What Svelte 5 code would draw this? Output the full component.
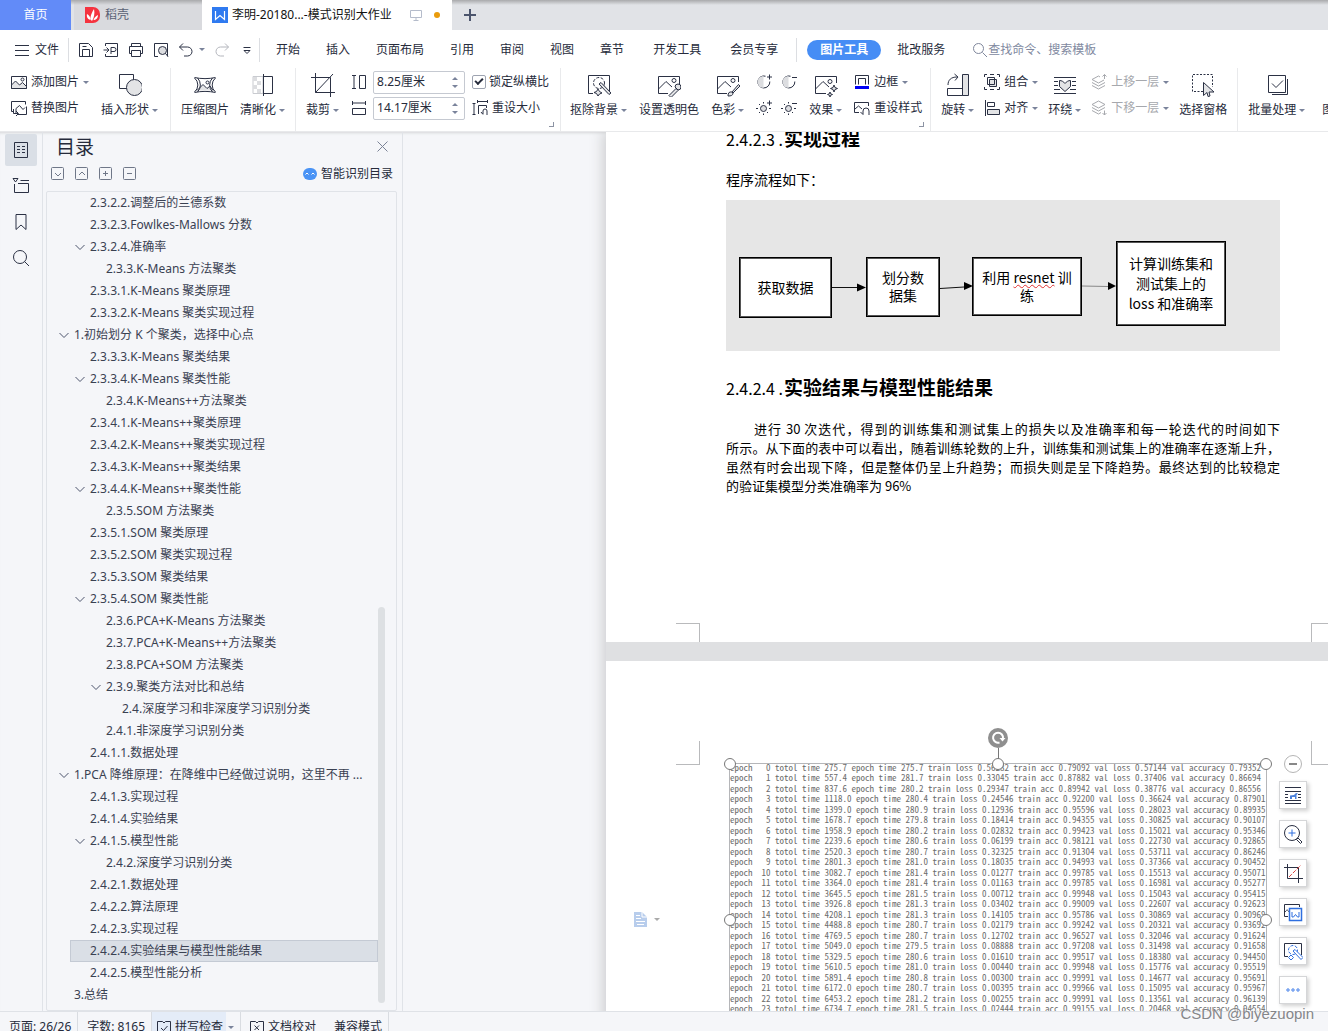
<script>
  const ICONS = {
    // menu row and quick access (16 x 16)
    burger: '<path d="M1 3.500h14M1 8.500h14M1 13.500h14"/>',
    save: '<path d="M1.500 1.500h9l4 4v9h-13zM4.500 14.500v-7h7v7M4.500 4.500h4"/>',
    exportPdf: '<path d="M2.500 4V1.500h12v13h-12V12M.5 8h5M3.500 5.500L6 8l-2.500 2.500M8 12V5.500h3a1.500 1.500 0 010 4H8"/>',
    print: '<path d="M3.500 4.500v-3h9v3M3.500 11.500h-2v-7h13v7h-2M3.500 8.500h9v6h-9z"/>',
    preview: '<path d="M5 14.500H1.500v-13h13v13"/><circle cx="9.500" cy="8.500" r="4" fill="#dcdde0"/><path d="M12.500 11.500l2.500 3"/>',
    undo: '<path d="M5 1.500L1.500 5 5 8.500M1.500 5h8a4.500 4.500 0 010 9H6"/>',
    redo: '<path d="M11 1.500L14.500 5 11 8.500M14.500 5h-8a4.500 4.500 0 000 9H10"/>',
    more: '<path d="M4.500 5.500h7M5 8.500l3 3 3-3z"/>',
    search: '<circle cx="6.500" cy="6.500" r="5"/><path d="M10.500 10.500l4.500 4.500"/>',
    // small ribbon icons (16 x 16)
    addPic: '<path d="M.5 2.500h15v12H.5z"/><path d="M.5 11l4-4 4 4 3-2.500 4 4v2H.5z" fill="#e3e4e6"/><circle cx="11.500" cy="5.500" r="1.500"/>',
    swapPic: '<path d="M3 11.500H.5v-10h14v3M5 13.500V8.500l3.500-3 3.500 4 2-2M15.500 6.500v8h-9M2.500 9v4.500H7M5 11l2.500 2.500L5 16"/>',
    height: '<path d="M1 1.500h4M1 14.500h4M3 1.500v13M8.500 1.500h6v13h-6z"/>',
    width: '<path d="M1.500 1v4M14.500 1v4M1.500 3h13M1.500 8.500h13v6h-13z"/>',
    resetSize: '<path d="M.5 3.500h3M.5 14.500h3M2 3.500v11M5 1.500h11M5.500 0v3M15.500 0v3M6.500 14V5.500h8V8M9 12l2 2.500M11 14v-3a2 2 0 014 0v4"/>',
    conUp: '<path d="M9.500 2.200A6 6 0 1013.800 7.500" fill="none"/><path d="M7.500 2a6 6 0 000 12z" fill="#dcdde0" stroke="none"/><path d="M11 3h5M13.500.5v5"/>',
    conDown: '<path d="M9.500 2.200A6 6 0 1013.800 7.500" fill="none"/><path d="M7.500 2a6 6 0 000 12z" fill="#dcdde0" stroke="none"/><path d="M11 3.500h5"/>',
    briUp: '<circle cx="7.500" cy="8.500" r="3" fill="#dcdde0"/><path d="M7.500 2v1.500M7.500 13.500V15M0 8.500h2M13 8.500h2M3 4l1 1M11 12l1 1M3 13l1-1M11 3h5M13.500.5v5"/>',
    briDown: '<circle cx="7.500" cy="8.500" r="3" fill="#dcdde0"/><path d="M7.500 2v1.500M7.500 13.500V15M0 8.500h2M13 8.500h2M3 4l1 1M11 12l1 1M3 13l1-1M11 3.500h5"/>',
    border: '<path d="M1.500 10.500v-9h13v9M4.500 10.500v-6h7v6"/><path d="M1 13.500h14" stroke="#0000f5" stroke-width="3"/>',
    resetStyle: '<path d="M5 12.500H.5v-10h14V6M1 9l3.500-3L8 9M6.500 12l2.500 2.500M9 14.500V11a3 3 0 016 0v4"/>',
    group: '<path d="M.5 3V.5H3M13 .5h2.500V3M15.500 13v2.500H13M3 15.500H.5V13M6 .5h4M6 15.500h4"/><path d="M5.500 5.500h7v7h-7z" fill="#e3e4e6"/><path d="M3.500 3.500h7v7h-7z"/>',
    align: '<path d="M1.500 0v16M3.500 2.500h7v4h-7z"/><path d="M3.500 9.500h12v5h-12z" fill="#e3e4e6"/>',
    layerUp: '<path d="M9 3L7.500 2 1 5.500 7.500 9 13 6M1 8.500L7.500 12 14 8.500M1 11.500L7.500 15l6.500-3.500M13.500 5V.5M11.500 2.500l2-2 2 2"/>',
    layerDown: '<path d="M7.500 1L1 4.500 7.500 8 14 4.500zM1 7.500L7.500 11 14 7.500M1 10.500L7.500 14l2.500-1.500M13.500 10.500V15M11.500 13l2 2 2-2"/>',
    // large ribbon icons (24 x 24)
    shapes: '<path d="M1.500 1.500h14v14h-14z"/><circle cx="16.500" cy="14.500" r="8" fill="#e3e4e6"/>',
    compress: '<path d="M1.500 4.500c7 1.500 14 1.500 21 0M1.500 19.500c7-1.500 14-1.500 21 0"/><path d="M4 17.500l6-6 4 4 3-2.500 3 4.500" fill="#e3e4e6"/><circle cx="14.500" cy="9.500" r="1.500"/><path d="M1.500 5a9 9 0 010 14M4.500 5a10 10 0 010 14M22.500 5a9 9 0 000 14M19.500 5a10 10 0 000 14"/>',
    sharpen: '<path d="M2 3.500h10v17H2z" fill="#fff" stroke="#c9cbd0"/><path d="M2 4h4v4H2zM6 8h4v4H6zM2 12h4v4H2zM6 16h4v4H6z" fill="#dcdde0" stroke="none"/><path d="M12.500 1v22M12 3.500h9.500v17H12"/>',
    crop: '<path d="M4.500 0v19.500H24M0 4.500h19.500V24M4.500 19.500L22 1"/>',
    cutout: '<path d="M6 20.500H1.500v-18h21v16"/><circle cx="12" cy="10" r="5.500" stroke-dasharray="3 1.500"/><path d="M12 11l2-1.500 10 10.500-2 1.500zM11 16l1.500 2.500L15 20l-2.500 1L11 23l-1.500-2.500L7 19.500l2.500-1z" fill="#e3e4e6"/>',
    transp: '<path d="M11 20.500H1.500v-17h21V11M1.500 16L9 8.500l6 5.500"/><circle cx="17" cy="7.500" r="2"/><path d="M12 22.500l7-7 2 2-7 7zM18 14a3 3 0 113 3z" fill="#e3e4e6"/>',
    color: '<path d="M11 20.500H1.500v-17h21V9M1.500 16L9 8.500l6 5.500"/><circle cx="17" cy="7.500" r="2"/><path d="M12 23c0-3 1-4.500 4-4l1 1c0 2.500-2 3-5 3zM16 19l6.500-7.500 1.500 1.500-7 7z" fill="#e3e4e6"/>',
    effect: '<path d="M12 20.500H1.500v-17h21V10M1.500 16L9 8.500l6 5.500"/><circle cx="16" cy="8.500" r="2"/><path d="M20 12l1 2.500 2.500 1-2.500 1-1 2.500-1-2.500-2.500-1 2.500-1zM16 19l.7 1.800 1.800.7-1.800.7L16 24l-.7-1.800-1.800-.7 1.800-.7z" fill="#e3e4e6"/>',
    rotate: '<path d="M16.500 1.500h6v21h-6z" fill="#e3e4e6"/><path d="M1.500 15.500h15v7h-15zM2 12c0-5 3-8 9-8M8.500 1L12 4 9 7.500"/>',
    wrap: '<path d="M1 4.500h22M1 8.500h4M19 8.500h4M1 12.500h4M19 12.500h4M1 16.500h6M17 16.500h6M1 20.500h22"/><path d="M6.500 7.500c2 0 4 1 5.500 3 1.500-2 3.500-3 5.500-3v6L12 18.500l-5.500-5z" fill="#e3e4e6"/>',
    select: '<path d="M12 18.500H1.500v-17h20V14" stroke-dasharray="2 1.500"/><path d="M12.500 9.500v13l3.500-3 1 4 2-.5-1-4h5z" fill="#e3e4e6"/>',
    batch: '<path d="M3.500 2.500h17v17h-17zM22.500 6v15.500H7M7 10.500l4 4 7-7"/>',
    // navigation rail
    outline: '<path d="M2.500 1.500h13v15h-13zM5 5.500h3M10 5.500h3M5 8.500h3M10 8.500h3M5 11.500h3M10 11.500h3"/>',
    chapters: '<path d="M1 1.500h5L3.500 5zM8.500 3.500H17M2.500 7v8.500h14v-9H6"/>',
    bookmark: '<path d="M4 1.500h10v15L9 12l-5 4.500z"/>',
    find: '<circle cx="8" cy="8" r="6.500"/><path d="M12.500 12.500L17 17"/>',
    // status bar
    spell: '<path d="M1.500 2.500h5l1.500 1.500 1.500-1.500h5v13h-13zM5 9l2.500 2.500 4-4.500"/>',
    proof: '<path d="M1.500 2.500h5l1.500 1.500 1.500-1.500h5v13h-13zM5.500 6.500l4.500 4.500M10 6.500L5.500 11"/>',
    // picture side bar (20 x 20)
    fWrap: '<path d="M2 2.500h16M2 6.500h16M2 9.500h3M15 9.500h3M2 12.500h3M15 12.500h3M2 15.500h16M2 18.500h16"/><path d="M7 14v-3.500l4-.5 2-2 2 .5-1.500 1.500V14H12v-2H9v2z" fill="#4a80dc" stroke="none"/>',
    fZoom: '<circle cx="9" cy="9" r="7.500"/><path d="M15 14l4 4-1.500 1.500-4-4z"/><path d="M5.500 9h7M9 5.500v7" stroke="#2f6fe0"/>',
    fCrop: '<path d="M4.500 1v14.500H20M1 4.500h14.500V20"/><path d="M6 14L18 2" stroke="#d8433e" stroke-dasharray="4 1.500"/>',
    fWord: '<path d="M5 14.500H1.500v-12h15V5M2 10c2-3 3-2 4 0"/><path d="M6.500 6.500h12v12h-12z" fill="#fff" stroke="#2f6fe0" stroke-width="1.500"/><path d="M9 10v5h1.500l2-2.500 2 2.500H16v-5" stroke="#2f6fe0"/>',
    fMagic: '<path d="M5 15.500H1.500v-13h17V14"/><g stroke="#2f6fe0"><circle cx="10" cy="9" r="4.500" stroke-dasharray="3 1.500"/><path d="M10 10l2-1.500 8 8-2 2zM8 14l2.500 2.500L8 19l-2.500-2.500z" fill="#fff"/></g>',
    fMore: '<g stroke="#3d7bea"><circle cx="5" cy="10" r="1.200"/><circle cx="10" cy="10" r="1.200"/><circle cx="15" cy="10" r="1.200"/></g>'
  };

  const quick = [
    ['save', '保存'], ['exportPdf', '输出为PDF'], ['print', '打印'], ['preview', '打印预览']
  ];
  const tabs = ['开始', '插入', '页面布局', '引用', '审阅', '视图', '章节', '开发工具', '会员专享'];

  // [level, text, expandable]
  const toc = [
    [2, '2.3.2.2.调整后的兰德系数'], [2, '2.3.2.3.Fowlkes-Mallows 分数'], [2, '2.3.2.4.准确率', 1],
    [3, '2.3.3.K-Means 方法聚类'], [2, '2.3.3.1.K-Means 聚类原理'], [2, '2.3.3.2.K-Means 聚类实现过程'],
    [1, '1.初始划分 K 个聚类，选择中心点', 1], [2, '2.3.3.3.K-Means 聚类结果'], [2, '2.3.3.4.K-Means 聚类性能', 1],
    [3, '2.3.4.K-Means++方法聚类'], [2, '2.3.4.1.K-Means++聚类原理'], [2, '2.3.4.2.K-Means++聚类实现过程'],
    [2, '2.3.4.3.K-Means++聚类结果'], [2, '2.3.4.4.K-Means++聚类性能', 1], [3, '2.3.5.SOM 方法聚类'],
    [2, '2.3.5.1.SOM 聚类原理'], [2, '2.3.5.2.SOM 聚类实现过程'], [2, '2.3.5.3.SOM 聚类结果'],
    [2, '2.3.5.4.SOM 聚类性能', 1], [3, '2.3.6.PCA+K-Means 方法聚类'], [3, '2.3.7.PCA+K-Means++方法聚类'],
    [3, '2.3.8.PCA+SOM 方法聚类'], [3, '2.3.9.聚类方法对比和总结', 1], [4, '2.4.深度学习和非深度学习识别分类'],
    [3, '2.4.1.非深度学习识别分类'], [2, '2.4.1.1.数据处理'], [1, '1.PCA 降维原理：在降维中已经做过说明，这里不再 ...', 1],
    [2, '2.4.1.3.实现过程'], [2, '2.4.1.4.实验结果'], [2, '2.4.1.5.模型性能', 1], [3, '2.4.2.深度学习识别分类'],
    [2, '2.4.2.1.数据处理'], [2, '2.4.2.2.算法原理'], [2, '2.4.2.3.实现过程'], [2, '2.4.2.4.实验结果与模型性能结果'],
    [2, '2.4.2.5.模型性能分析'], [1, '3.总结']
  ];
  const current = 34;

  // total time, epoch time, train loss, train acc, val loss, val accuracy
  const epochs = [
    '275.7 275.7 0.56282 0.79092 0.57144 0.79352', '557.4 281.7 0.33045 0.87882 0.37406 0.86694',
    '837.6 280.2 0.29347 0.89942 0.38776 0.86556', '1118.0 280.4 0.24546 0.92200 0.36624 0.87901',
    '1399.0 280.9 0.12936 0.95596 0.28023 0.89935', '1678.7 279.8 0.18414 0.94355 0.30825 0.90107',
    '1958.9 280.2 0.02832 0.99423 0.15021 0.95346', '2239.6 280.6 0.06199 0.98121 0.22730 0.92865',
    '2520.3 280.7 0.32325 0.91304 0.53711 0.86246', '2801.3 281.0 0.18035 0.94993 0.37366 0.90452',
    '3082.7 281.4 0.01277 0.99785 0.15513 0.95071', '3364.0 281.4 0.01163 0.99785 0.16981 0.95277',
    '3645.5 281.5 0.00712 0.99948 0.15043 0.95415', '3926.8 281.3 0.03402 0.99009 0.22607 0.92623',
    '4208.1 281.3 0.14105 0.95786 0.30869 0.90969', '4488.8 280.7 0.02179 0.99242 0.20321 0.93692',
    '4769.5 280.7 0.12702 0.96527 0.32046 0.91624', '5049.0 279.5 0.08888 0.97208 0.31498 0.91658',
    '5329.5 280.6 0.01610 0.99517 0.18380 0.94450', '5610.5 281.0 0.00440 0.99948 0.15776 0.95519',
    '5891.4 280.8 0.00300 0.99991 0.14677 0.95691', '6172.0 280.7 0.00395 0.99966 0.15095 0.95967',
    '6453.2 281.2 0.00255 0.99991 0.13561 0.96139', '6734.7 281.5 0.02444 0.99155 0.20468 0.94554'
  ].map((row, i) => {
    const [t, e, tl, ta, vl, va] = row.split(' ');
    return `epoch ${String(i).padStart(3)} totol time ${t} epoch time ${e} train loss ${tl} train acc ${ta} val loss ${vl} val accuracy ${va}`;
  });

  const floats = [
    ['fWrap', '布局选项'], ['fZoom', '放大'], ['fCrop', '裁剪'], ['fWord', '图片转文字'], ['fMagic', '抠除背景'], ['fMore', '更多']
  ];
  let locked = $state(true);
</script>

{#snippet icon(name, size = 16)}
  <svg class="ic s{size}" viewBox="0 0 {size} {size}" aria-hidden="true">{@html ICONS[name]}</svg>
{/snippet}

{#snippet small(name, label, arrow = true, off = false)}
  <button class="small" disabled={off}>{@render icon(name)}<span>{label}</span>{#if arrow}<i class="arrow"></i>{/if}</button>
{/snippet}

{#snippet big(name, label, arrow = true)}
  <button class="big">{@render icon(name, 24)}<span class="lab">{label}{#if arrow}<i class="arrow"></i>{/if}</span></button>
{/snippet}

{#snippet field(name, label, value)}
  <div class="field">
    {@render icon(name)}
    <div class="spin">
      <input aria-label={label} {value} />
      <div class="steps">
        <button aria-label="增加"><i class="arrow up"></i></button>
        <button aria-label="减少"><i class="arrow"></i></button>
      </div>
    </div>
  </div>
{/snippet}

<div class="app">
  <header class="tabbar">
    <button class="home">首页</button>
    <button class="doc shell">
      <svg class="logo" viewBox="0 0 16 16" aria-hidden="true">
        <path d="M0 0h8a7 7 0 017 7v2a7 7 0 01-7 7H0z" fill="#f5333f" />
        <path d="M7 14C4 12 6 7 9 2c1 4 0 9-2 12zM5.500 13C2 12 1.500 9 2 7c2 1 3.500 3 3.500 6zM8.500 13c.5-2 2-4 4.500-5 0 3-2 5-4.500 5z" fill="#fff" />
      </svg>
      <span>稻壳</span>
    </button>
    <button class="doc active">
      <svg class="logo" viewBox="0 0 16 16" aria-hidden="true">
        <rect width="16" height="16" fill="#2f7af0" />
        <path d="M3.500 4v8.500L8 8.500l4.500 4V4" fill="none" stroke="#fff" stroke-width="1.200" />
      </svg>
      <span class="name">李明-20180...-模式识别大作业</span>
      <svg class="screen" viewBox="0 0 12 12" aria-hidden="true"><path d="M.5 1.500h11v7H.5zM6 9v2M3.500 11.500h5" /></svg>
      <i class="dot"></i>
    </button>
    <button class="add" aria-label="新建"><svg viewBox="0 0 12 12" aria-hidden="true"><path d="M6 0v12M0 6h12" /></svg></button>
  </header>

  <nav class="menu">
    <button class="file">{@render icon('burger')}<span>文件</span></button>
    <div class="quick">
      {#each quick as [name, label]}<button aria-label={label}>{@render icon(name)}</button>{/each}
      <button aria-label="撤销" class="drop">{@render icon('undo')}<i class="arrow"></i></button>
      <button aria-label="恢复" class="faded">{@render icon('redo')}</button>
      <button aria-label="自定义">{@render icon('more')}</button>
    </div>
    <div class="tabs">
      {#each tabs as t}<button>{t}</button>{/each}
    </div>
    <button class="pill">图片工具</button>
    <button>批改服务</button>
    <label class="search">{@render icon('search')}<input placeholder="查找命令、搜索模板" aria-label="查找命令、搜索模板" /></label>
  </nav>

  <div class="ribbon">
    <section class="wide">
      <div class="col">{@render small('addPic', '添加图片')}{@render small('swapPic', '替换图片', false)}</div>
      {@render big('shapes', '插入形状')}
    </section>
    <section>
      {@render big('compress', '压缩图片', false)}
      {@render big('sharpen', '清晰化')}
    </section>
    <section class="size">
      {@render big('crop', '裁剪')}
      <div class="col">{@render field('height', '高度', '8.25厘米')}{@render field('width', '宽度', '14.17厘米')}</div>
      <div class="col last">
        <label class="lock"><input type="checkbox" bind:checked={locked} />锁定纵横比</label>
        {@render small('resetSize', '重设大小', false)}
      </div>
      <i class="corner"></i>
    </section>
    <section class="adjust">
      {@render big('cutout', '抠除背景')}
      {@render big('transp', '设置透明色', false)}
      {@render big('color', '色彩')}
      <div class="quad">
        <button aria-label="增加对比度">{@render icon('conUp')}</button>
        <button aria-label="降低对比度">{@render icon('conDown')}</button>
        <button aria-label="增加亮度">{@render icon('briUp')}</button>
        <button aria-label="降低亮度">{@render icon('briDown')}</button>
      </div>
      {@render big('effect', '效果')}
      <div class="col">{@render small('border', '边框')}{@render small('resetStyle', '重设样式', false)}</div>
      <i class="corner"></i>
    </section>
    <section class="arrange">
      {@render big('rotate', '旋转')}
      <div class="col">{@render small('group', '组合')}{@render small('align', '对齐')}</div>
      {@render big('wrap', '环绕')}
      <div class="col">{@render small('layerUp', '上移一层', true, true)}{@render small('layerDown', '下移一层', true, true)}</div>
      {@render big('select', '选择窗格', false)}
    </section>
    <section>
      {@render big('batch', '批量处理')}
      {@render big('', '图', false)}
    </section>
  </div>

  <main>
    <aside class="rail">
      <button class="on" aria-label="目录">{@render icon('outline', 18)}</button>
      <button aria-label="章节">{@render icon('chapters', 18)}</button>
      <button aria-label="书签">{@render icon('bookmark', 18)}</button>
      <button aria-label="查找">{@render icon('find', 18)}</button>
    </aside>

    <aside class="panel">
      <div class="head">
        <h2>目录</h2>
        <button aria-label="关闭"><svg class="close" viewBox="0 0 11 11" aria-hidden="true"><path d="M.5.5l10 10M10.500.5l-10 10" /></svg></button>
      </div>
      <div class="tools">
        {#each [['M4 6l3 3 3-3', '展开'], ['M4 8l3-3 3 3', '收起'], ['M4 6.500h5M6.500 4v5', '增加级别'], ['M4 6.500h5', '减少级别']] as [d, label]}
          <button aria-label={label}><svg class="box" viewBox="0 0 14 14" aria-hidden="true"><rect x=".5" y=".5" width="12" height="12" rx="1" /><path {d} /></svg></button>
        {/each}
        <button class="smart">
          <svg viewBox="0 0 14 14" aria-hidden="true"><rect y="1" width="14" height="12" rx="6" fill="#4a93f5" /><path d="M2.500 7.500L4 6l1.500 1.500M8.500 7.500L10 6l1.500 1.500" stroke="#fff" fill="none" /></svg>
          智能识别目录
        </button>
      </div>
      <div class="list">
        <ul>
          {#each toc as [level, text, open], i}
            <li class="l{level}" class:cur={i === current}>
              <svg class="chev" viewBox="0 0 10 10" aria-hidden="true">{#if open}<path d="M.5 3L5 7.500 9.500 3" />{/if}</svg>
              <a href="#h{i}">{text}</a>
            </li>
          {/each}
        </ul>
        <i class="thumb"></i>
      </div>
    </aside>

    <div class="work">
      <div class="pages">
        <article class="page first">
          <h3><span class="num">2.4.2.3 .</span>实现过程</h3>
          <p class="lead">程序流程如下：</p>
          <div class="flow">
            <svg viewBox="0 0 554 151" aria-hidden="true">
              <path d="M106 87.500h26M214 88.500l24-1.500" stroke="#111" />
              <path d="M356 86l26 .5" stroke="#888" />
              <path d="M131 83.500l9 4-9 4zM238 82l9 4-9 4zM382 82l8 4-8 4z" fill="#000" />
            </svg>
            <div class="node n1">获取数据</div>
            <div class="node n2">划分数<br />据集</div>
            <div class="node n3"><span>利用 <u>resnet</u> 训<br />练</span></div>
            <div class="node n4">计算训练集和<br />测试集上的<br />loss 和准确率</div>
          </div>
          <h3><span class="num">2.4.2.4 .</span>实验结果与模型性能结果</h3>
          <p class="body">
            <span class="ln indent">进行 30 次迭代，得到的训练集和测试集上的损失以及准确率和每一轮迭代的时间如下</span>
            <span class="ln">所示。从下面的表中可以看出，随着训练轮数的上升，训练集和测试集上的准确率在逐渐上升，</span>
            <span class="ln">虽然有时会出现下降，但是整体仍呈上升趋势；而损失则是呈下降趋势。最终达到的比较稳定</span>
            <span class="ln end">的验证集模型分类准确率为 96%</span>
          </p>
          <i class="mark bl"></i><i class="mark br"></i>
        </article>

        <article class="page second">
          <i class="mark tl"></i><i class="mark tr"></i>
          <button class="para" aria-label="段落布局">
            <svg viewBox="0 0 13 15" aria-hidden="true"><path d="M0 0h8l5 5v10H0z" fill="#b8cdec" /><path d="M8 0v5h5M2 3.500h4M2 6.500h5M2 9.500h9M3 12.500h7" stroke="#fff" fill="none" /></svg>
            <i class="arrow"></i>
          </button>
          <figure>
            <svg class="log" viewBox="0 0 1072 624" role="img" aria-label="训练日志">
              {#each epochs as line, i}<text x="0" y={13 + i * 21}>{line}</text>{/each}
            </svg>
            <i class="stem"></i>
            <svg class="turn" viewBox="0 0 20 20" aria-hidden="true"><circle cx="10" cy="10" r="10" fill="#8f8f8f" /><path d="M11.500 14.500A5 5 0 1115 10.500" fill="none" stroke="#fff" stroke-width="2" /><path d="M11.500 10h6l-3 3.500z" fill="#fff" /></svg>
            {#each ['nw', 'n', 'ne', 'w', 'e'] as h}<i class="handle {h}"></i>{/each}
          </figure>
          <div class="floats">
            <button class="fold" aria-label="收起"></button>
            {#each floats as [name, label]}<button class="tool" aria-label={label}>{@render icon(name, 20)}</button>{/each}
          </div>
        </article>
      </div>
    </div>
  </main>

  <footer>
    <span class="st">页面: 26/26</span>
    <span class="st">字数: 8165</span>
    <button class="chk">{@render icon('spell')}拼写检查</button>
    <i class="arrow"></i>
    <button class="proof">{@render icon('proof')}文档校对</button>
    <span class="st">兼容模式</span>
  </footer>
  <div class="credit">CSDN @biyezuopin</div>
</div>

<style>
  :global(body) { overflow: hidden; }
  .app {
    position: relative;
    display: flex;
    flex-direction: column;
    height: 100vh;
    overflow: hidden;
    background: #fff;
    color: #262b3b;
    font: 12px/16px "Noto Sans", "Noto Sans CJK SC", sans-serif;
  }
  .app :is(button, input) {
    margin: 0;
    padding: 0;
    border: 0;
    background: none;
    color: inherit;
    font: inherit;
    white-space: nowrap;
  }
  button { display: flex; align-items: center; }
  svg { display: block; flex: none; }
  .ic { fill: none; stroke: #2b3144; stroke-width: 1; }
  .s16 { width: 16px; height: 16px; }
  .s18 { width: 18px; height: 18px; }
  .s20 { width: 20px; height: 20px; }
  .s24 { width: 24px; height: 24px; }
  .arrow {
    flex: none;
    border: 3px solid transparent;
    border-top-color: #7a839b;
    border-bottom: 0;
  }
  .arrow.up { border: 3px solid transparent; border-bottom-color: #7a839b; border-top: 0; }

  .tabbar {
    display: flex;
    flex: none;
    height: 30px;
    background: linear-gradient(#a9aaac, #e1e3e7 5px);
  }
  .tabbar .home { width: 71px; justify-content: center; background: #628bf8; color: #fff; }
  .doc { gap: 4px; }
  .tabbar .shell { width: 128px; margin: 0 3px; padding-left: 11px; background: linear-gradient(#a9aaac, #d9dade 5px); color: #5a6175; }
  .tabbar .active { width: 250px; margin-left: -3px; padding-left: 10px; background: #fff; color: #111; }
  .logo { width: 16px; height: 16px; }
  .screen { width: 12px; height: 12px; margin-left: 14px; fill: none; stroke: #b5bccb; }
  .dot { width: 6px; height: 6px; margin-left: 8px; border-radius: 50%; background: #e99b0c; }
  .tabbar .add { padding: 0 12px; }
  .add svg { width: 12px; height: 12px; stroke: #4c556d; stroke-width: 2; }

  .menu { display: flex; flex: none; align-items: center; box-sizing: border-box; height: 38px; padding-top: 1px; }
  .file { gap: 5px; }
  .menu .file { padding: 0 9px 0 14px; border-right: 1px solid #dcdee2; height: 24px; }
  .quick { display: flex; align-items: center; gap: 9px; height: 24px; padding: 0 4px 0 9px; border-right: 1px solid #dcdee2; }
  .drop { gap: 5px; }
  .faded { opacity: 0.35; }
  .tabs { display: flex; gap: 26px; height: 24px; padding: 0 18px 0 16px; border-right: 1px solid #dcdee2; }
  .tabs button:nth-child(n + 8) { margin-left: 3px; }
  .menu .pill { height: 20px; margin: 0 16px 0 10px; padding: 0 13px; border-radius: 10px; background: #468df5; color: #fff; font-weight: 700; }
  .search { display: flex; flex: 1; align-items: center; margin-left: 27px; }
  .search .ic { stroke: #7f879c; }
  .search input { flex: 1; min-width: 0; }
  .search input::placeholder { color: #8189a0; opacity: 1; }

  .ribbon {
    position: relative;
    z-index: 1;
    display: flex;
    flex: none;
    height: 64px;
    overflow: hidden;
    border-bottom: 1px solid #e8e9eb;
    box-sizing: border-box;
    background: #fff;
  }
  section {
    position: relative;
    display: flex;
    flex: none;
    gap: 11px;
    padding: 0 10px;
    border-right: 1px solid #e9eaec;
  }
  .wide { gap: 12px; padding: 0 12px 0 11px; }
  .size { gap: 12px; padding: 0 11px 0 10px; }
  .adjust { gap: 12px; padding: 0 8px 0 9px; }
  .arrange { gap: 10px; }
  section:last-child { border: 0; }
  .big { flex-direction: column; align-items: center; gap: 5px; height: 54px; }
  .app .big { padding-top: 5px; }
  .lab { display: flex; align-items: center; gap: 3px; }
  .col { display: grid; grid-template-rows: 26px 26px; align-content: start; padding-top: 1px; }
  .col.last { margin-left: -5px; }
  .small { gap: 4px; }
  .small:disabled { color: #a6a8ad; }
  .small:disabled .ic { stroke: #a6a8ad; }
  .field { display: flex; align-items: center; gap: 6px; }
  .spin { display: flex; box-sizing: border-box; width: 92px; height: 23px; border: 1px solid #c5c9d1; border-radius: 2px; }
  .spin input { flex: 1; min-width: 0; margin-left: 3px; }
  .steps { display: flex; flex-direction: column; justify-content: space-evenly; width: 12px; }
  .lock { display: flex; align-items: center; gap: 3px; }
  .app .lock input {
    appearance: none;
    display: grid;
    place-items: center;
    box-sizing: border-box;
    width: 14px;
    height: 14px;
    border: 1px solid #9ea4b1;
    border-radius: 2px;
  }
  .lock input:checked::after {
    content: "";
    width: 6px;
    height: 3px;
    margin-bottom: 3px;
    border: solid #262b3b;
    border-width: 0 0 2px 2px;
    rotate: -45deg;
  }
  .quad { display: grid; grid-template: 26px 26px / 16px 16px; gap: 0 9px; padding-top: 1px; }
  .corner { position: absolute; right: 6px; bottom: 4px; width: 4px; height: 4px; border: solid #8c93a3; border-width: 0 1px 1px 0; }

  main { display: flex; flex: 1; min-height: 0; background: #f5f6f9; box-shadow: inset 0 3px 3px -2px #d5d6d8; }
  .rail { display: flex; flex: none; flex-direction: column; align-items: center; gap: 4px; width: 42px; padding-top: 2px; border-right: 1px solid #e0e3e8; }
  .rail button { justify-content: center; width: 32px; height: 32px; border-radius: 2px; }
  .rail .on { background: #dadfe6; }
  .panel { display: flex; flex: none; flex-direction: column; width: 351px; padding: 0 5px 0 3px; border-right: 1px solid #e0e3e8; }
  .head { display: flex; align-items: center; justify-content: space-between; height: 29px; padding: 0 9px 0 10px; }
  h2 { margin: 0; font-size: 19px; font-weight: 400; line-height: 28px; }
  .close { width: 11px; height: 11px; stroke: #7b8397; }
  .tools { display: flex; align-items: center; gap: 10px; height: 25px; padding: 0 4px 5px 5px; }
  .box { width: 14px; height: 14px; fill: none; stroke: #6f7788; }
  .smart { gap: 4px; }
  .app .smart { margin-left: auto; }
  .smart svg { width: 14px; height: 14px; }
  .list { position: relative; flex: 1; min-height: 0; overflow: hidden; border: 1px solid #e0e3e8; border-radius: 2px; }
  ul { margin: 0; padding: 0 18px 0 23px; list-style: none; }
  li { display: flex; align-items: center; gap: 5px; box-sizing: border-box; height: 22px; color: #3a4152; white-space: nowrap; }
  li a { color: inherit; text-decoration: none; }
  .chev { width: 10px; height: 10px; fill: none; stroke: #4c556d; }
  .l1 { margin-left: -11px; }
  .l2 { padding-left: 5px; }
  .l3 { padding-left: 21px; }
  .l4 { padding-left: 37px; }
  .cur { background: #dadfe6; outline: 1px solid #c4cad4; outline-offset: -1px; }
  .thumb { position: absolute; right: 11px; top: 415px; bottom: 7px; width: 7px; border-radius: 4px; background: #dde0e3; }

  .work { flex: 1; min-width: 0; overflow: hidden; padding-left: 203px; }
  .pages { display: flow-root; width: 798px; background: #dfe0e2; box-shadow: 0 0 14px 2px #c8c9cb; }
  .page { position: relative; display: flow-root; box-sizing: border-box; background: #fff; color: #000; font-family: "Noto Sans CJK SC", sans-serif; }
  .first { height: 510px; padding: 0 124px 0 120px; }
  .second { height: 600px; margin-top: 19px; padding: 103px 138px 0 124px; }
  h3 { margin: 24px 0 18px; font-size: 19px; line-height: 24px; font-weight: 700; }
  .first h3:first-child { margin-top: -6px; }
  .num { display: inline-block; width: 58px; font-size: 16px; font-weight: 400; white-space: pre; }
  .lead { margin: 0 0 11px; font-size: 14px; line-height: 20px; }
  .flow { position: relative; height: 151px; background: #e6e6e6; }
  .flow svg { width: 554px; height: 151px; }
  .node {
    position: absolute;
    display: grid;
    place-items: center;
    box-sizing: border-box;
    padding-bottom: 2px;
    border: 1px solid #000;
    outline: 1px solid #555;
    outline-offset: -2px;
    background: #fff;
    font-size: 14px;
    line-height: 18px;
    text-align: center;
    white-space: nowrap;
  }
  .n1 { left: 13px; top: 57px; width: 93px; height: 61px; }
  .n2 { left: 140px; top: 57px; width: 74px; height: 60px; }
  .n3 { left: 246px; top: 57px; width: 110px; height: 59px; }
  .n4 { left: 390px; top: 41px; width: 110px; height: 85px; line-height: 20px; }
  u { text-decoration: underline wavy #e03030 1px; text-underline-offset: 1px; }
  .body { margin: 19px 0 0; font-size: 13px; line-height: 19px; }
  .ln { display: block; text-align: justify; text-align-last: justify; white-space: nowrap; }
  .indent { padding-left: 28px; }
  .end { text-align-last: left; }
  .mark { position: absolute; width: 23px; height: 18px; border: 0 solid #b9babc; }
  .bl { left: 70px; bottom: 0; border-width: 1px 1px 0 0; }
  .br { left: 705px; bottom: 0; border-width: 1px 0 0 1px; }
  .tl { left: 70px; top: 80px; height: 23px; border-width: 0 1px 1px 0; }
  .tr { left: 705px; top: 80px; height: 23px; border-width: 0 0 1px 1px; }
  .para { position: absolute; left: 28px; top: 251px; gap: 7px; }
  .para svg { width: 13px; height: 15px; }
  .para .arrow { border-top-color: #aaa; }

  figure { position: relative; margin: 0; outline: 1px solid #b5b6b9; }
  .log { width: 100%; height: auto; overflow: hidden; }
  .log text { font: 18px "Noto Sans Mono CJK SC", "Liberation Mono", monospace; fill: #6c6c6c; white-space: pre; }
  .handle { position: absolute; box-sizing: border-box; width: 12px; height: 12px; margin: -6px; border: 1px solid #777; border-radius: 50%; background: #fff; }
  .nw { left: 0; top: 0; }
  .n { left: 50%; top: 0; }
  .ne { left: 100%; top: 0; }
  .w { left: 0; top: 50%; }
  .e { left: 100%; top: 50%; }
  .stem { position: absolute; left: 50%; top: -16px; width: 1px; height: 12px; background: #777; }
  .turn { position: absolute; left: 50%; top: -36px; width: 20px; height: 20px; margin-left: -10px; }
  .floats { position: absolute; left: 673px; top: 94px; display: flex; flex-direction: column; align-items: center; gap: 11px; }
  .app .fold { justify-content: center; box-sizing: border-box; width: 18px; height: 18px; margin-bottom: -3px; border: 1px solid #b5b5b5; border-radius: 50%; background: #fff; }
  .fold::before { content: ""; width: 8px; height: 2px; background: #888; }
  .app .tool { justify-content: center; box-sizing: border-box; width: 28px; height: 28px; border: 1px solid #d5d6d8; background: #fff; box-shadow: 2px 2px 4px #d0d0d0; }

  footer { position: relative; display: flex; flex: none; align-items: flex-start; height: 19px; border-top: 1px solid #dfe2e7; background: #f5f6f9; overflow: hidden; }
  .st { padding: 7px 6px 0 9px; border-right: 1px solid #d9dce1; white-space: nowrap; }
  .chk, .proof { gap: 3px; }
  .app .chk { padding: 7px 3px 0 4px; background: #e4ecf8; }
  footer > .arrow { margin: 14px 6px 0 2px; }
  .app .proof { padding: 7px 9px 0 8px; border-left: 1px solid #d9dce1; }
  .credit { position: absolute; right: 14px; bottom: 6px; color: #85868a; font: 15px/22px "Liberation Sans", sans-serif; text-shadow: 0 0 2px #fff; }
</style>
